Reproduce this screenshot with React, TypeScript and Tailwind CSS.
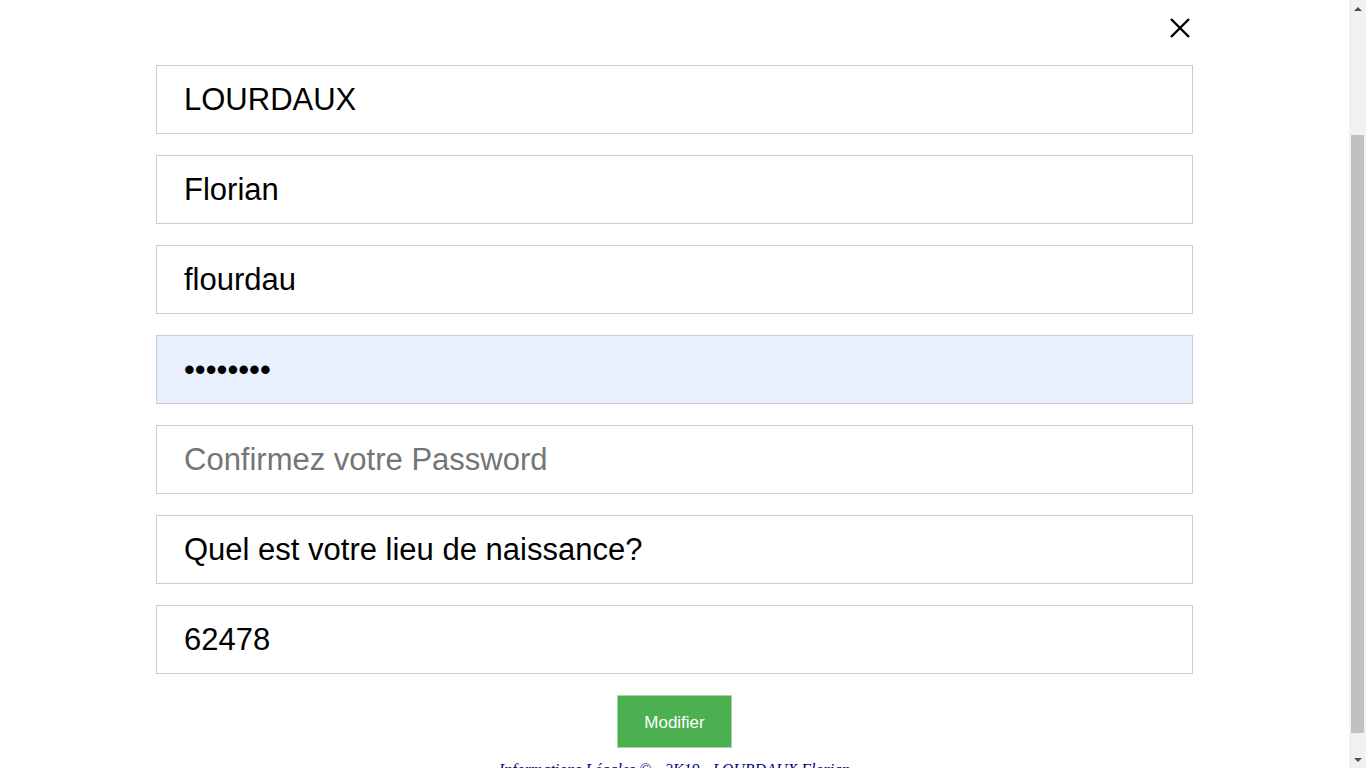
import React from 'react';

const fieldClass =
  "block h-[69px] w-full border border-[#cccccc] bg-white pl-[27px] pr-4 text-[31px] text-black outline-none placeholder:text-[#757575] font-['Liberation_Sans',Arial,sans-serif]";

function Scrollbar() {
  return (
    <div className="flex w-[17px] flex-col bg-[#f1f1f1]">
      <div className="flex h-[17px] items-center justify-center">
        <svg width="8" height="4" viewBox="0 0 8 4">
          <path d="M0 4 L4 0 L8 4 Z" fill="#505050" />
        </svg>
      </div>
      <div className="flex flex-1 flex-col px-[2px] pt-[118px] pb-[18px]">
        <div className="flex-1 bg-[#c1c1c1]" />
      </div>
      <div className="flex h-[17px] items-center justify-center">
        <svg width="8" height="4" viewBox="0 0 8 4">
          <path d="M0 0 L8 0 L4 4 Z" fill="#505050" />
        </svg>
      </div>
    </div>
  );
}

export default function App() {
  return (
    <div className="flex h-[768px] w-full overflow-hidden bg-white">
      <div className="flex-1">
        <div className="mx-auto flex w-[1037px] justify-end pr-[3px] pt-[18px]">
          <svg width="20" height="20" viewBox="0 0 20 20" className="text-black">
            <path d="M1 1 L19 19 M19 1 L1 19" stroke="currentColor" strokeWidth="2.4" />
          </svg>
        </div>

        <form className="mx-auto mt-[27px] flex w-[1037px] flex-col gap-[21px]">
          <input className={fieldClass} defaultValue="LOURDAUX" readOnly />
          <input className={fieldClass} defaultValue="Florian" readOnly />
          <input className={fieldClass} defaultValue="flourdau" readOnly />
          <input type="password" className={fieldClass + " !bg-[#e8f0fe]"} defaultValue="abcdefgh" readOnly />
          <input type="password" className={fieldClass} placeholder="Confirmez votre Password" readOnly />
          <input className={fieldClass} defaultValue="Quel est votre lieu de naissance?" readOnly />
          <input className={fieldClass} defaultValue="62478" readOnly />
          <div className="flex justify-center">
            <button
              type="button"
              className="h-[53px] w-[115px] border border-[#a8d5aa] bg-[#4caf50] pt-[2px] text-[17px] text-white font-['Liberation_Sans',Arial,sans-serif]"
            >
              Modifier
            </button>
          </div>
        </form>

        <p className="mt-[10px] text-center text-[16px] italic text-[#000080] font-['Liberation_Serif','Times_New_Roman',serif]">
          Informations Légales © - 2K19 - LOURDAUX Florian
        </p>
      </div>
      <Scrollbar />
    </div>
  );
}
